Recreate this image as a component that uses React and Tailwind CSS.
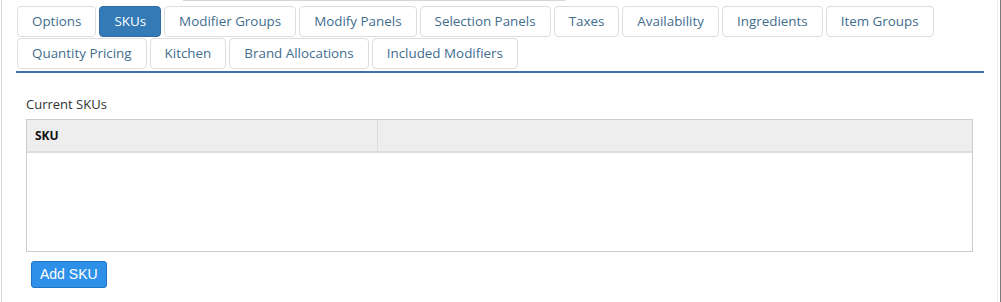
import React from "react";

const tabs = [
  "Options",
  "SKUs",
  "Modifier Groups",
  "Modify Panels",
  "Selection Panels",
  "Taxes",
  "Availability",
  "Ingredients",
  "Item Groups",
  "Quantity Pricing",
  "Kitchen",
  "Brand Allocations",
  "Included Modifiers",
];

const App = () => {
  const active = "SKUs";

  return (
    <div className="relative h-[302px] w-[1001px] overflow-hidden bg-white font-['Open_Sans',sans-serif]">
      {/* page edges */}
      <div className="absolute left-[1px] top-0 h-full w-px bg-[#dcdcdc]" />
      <div className="absolute right-[3px] top-0 h-full w-px bg-[#ececec]" />
      <div className="absolute right-0 top-0 h-full w-px bg-[#7a7a7a]" />
      <div className="absolute left-[183px] top-0 h-px w-[382px] bg-[#d6d6d6]" />

      <div className="pl-[16px] pr-[17px] pt-[6px]">
        {/* TABS */}
        <div className="flex flex-wrap gap-x-[3px] gap-y-px pl-px">
          {tabs.map((t) => (
            <div
              key={t}
              className={
                t === active
                  ? "h-[31px] rounded-[4px] border border-[#2e6da4] bg-[#337ab7] px-[14px] text-[13.4px] leading-[29px] text-white"
                  : "h-[31px] rounded-[4px] border border-[#dddddd] bg-white px-[14px] text-[13.4px] leading-[29px] text-[#3f6d8e]"
              }
            >
              {t}
            </div>
          ))}
        </div>
        <div className="mt-[2px] h-[2px] w-[968px] bg-[#3a76ad]" />

        {/* SKU LIST */}
        <div className="pl-[10px] pt-[22px]">
          <div className="text-[13px] leading-[18px] text-[#333]">Current SKUs</div>
          <div className="mt-[6px] h-[133px] w-[947px] border border-[#cccccc]">
            <div className="flex h-[33px] border-b-2 border-[#dddddd] bg-[#eeeeee]">
              <div className="w-[351px] border-r border-[#dddddd] pl-[8px] text-[12px] font-bold leading-[31px] text-[#111]">
                SKU
              </div>
              <div className="flex-1" />
            </div>
          </div>
          <button className="ml-[5px] mt-[9px] h-[27px] rounded-[3px] border border-[#1f74c4] bg-[#2f90ea] px-[8px] font-['Liberation_Sans',sans-serif] text-[14px] leading-[25px] text-white">
            Add SKU
          </button>
        </div>
      </div>
    </div>
  );
};

export default App;
